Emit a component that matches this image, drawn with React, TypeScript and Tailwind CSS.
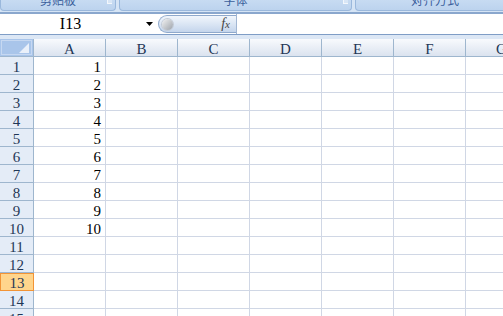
import * as React from "react";

const columns = ["A", "B", "C", "D", "E", "F", "G"];
const rows = Array.from({ length: 15 }, (_, i) => i + 1);
const values: Record<number, number> = { 1: 1, 2: 2, 3: 3, 4: 4, 5: 5, 6: 6, 7: 7, 8: 8, 9: 9, 10: 10 };

function RibbonGroup({ label, width, launcher = true }: { label: string; width: string; launcher?: boolean }) {
  return (
    <div
      className={`relative h-[11px] shrink-0 overflow-hidden rounded-b-[4px] border border-t-0 border-[#9ab8dc] bg-gradient-to-b from-[#c7dbf2] to-[#bcd3ee] ${width}`}
    >
      <div className="-mt-[7px] text-center font-['Noto_Sans_CJK_SC',sans-serif] text-[12px] leading-[14px] text-[#3b5f9c]">
        {label}
      </div>
      {launcher && (
        <div className="absolute right-[3px] top-0 h-[4px] w-[5px] border-b border-l border-[#f3f7fc] bg-[#d8e6f6]" />
      )}
    </div>
  );
}

export default function App() {
  return (
    <div className="h-[316px] w-[503px] overflow-hidden bg-white font-['Liberation_Serif','Noto_Sans_CJK_SC',serif]">
      {/* Ribbon group labels */}
      <div className="flex h-[12px] gap-[3px] bg-[#d5e4f5]">
        <RibbonGroup label="剪贴板" width="w-[116px]" />
        <RibbonGroup label="字体" width="w-[233px]" />
        <RibbonGroup label="对齐方式" width="w-[160px]" />
      </div>
      <div className="h-[2px] bg-[#8aa7cd]" />

      {/* Formula bar */}
      <div className="flex h-[20px] bg-white">
        <div className="relative flex w-[158px] shrink-0 items-center">
          <span className="w-[141px] text-center text-[16px] leading-none text-black">I13</span>
          <svg width="7" height="4" viewBox="0 0 7 4" className="absolute left-[146px] top-[8px]">
            <path d="M0 0H7L3.5 4Z" fill="#000" />
          </svg>
        </div>
        <div className="relative my-[1px] flex w-[78px] shrink-0 items-center justify-end rounded-l-full border border-r-0 border-[#8fa9cc] bg-gradient-to-b from-[#f1f6fc] via-[#dbe6f4] to-[#c4d5ec] pr-[6px]">
          <div className="absolute left-[3px] top-[3px] h-[11px] w-[11px] rounded-full bg-gradient-to-br from-[#f3f3f3] to-[#9da3ab] shadow-[0_0_0_1px_#c3cbd6]" />
          <span className="text-[14px] italic leading-none text-[#444]">
            f<span className="text-[11px]">x</span>
          </span>
        </div>
        <div className="flex-1 border-l border-[#a2b7d3] bg-white" />
      </div>
      <div className="h-[1px] bg-[#7f9dc6]" />
      <div className="h-[4px] bg-[#dce7f5]" />

      {/* Grid */}
      <div className="flex h-[18px]">
        <div className="relative h-[18px] w-[34px] shrink-0 border-b border-r border-[#9eb6ce] bg-[#a9c5ea]">
          <div className="absolute inset-[1px] border border-[#c6d8f1]" />
          <svg width="10" height="10" viewBox="0 0 10 10" className="absolute bottom-[3px] right-[4px]">
            <path d="M10 0V10H0Z" fill="#e9f0fa" />
          </svg>
        </div>
        {columns.map((c) => (
          <div
            key={c}
            className="flex h-[18px] w-[72px] shrink-0 items-end justify-center border-b border-r border-[#9eb6ce] bg-gradient-to-b from-[#f8fafd] to-[#dbe3ef] text-[15px] leading-[13px] text-[#1f3756]"
          >
            {c}
          </div>
        ))}
      </div>
      {rows.map((r) => {
        const active = r === 13;
        return (
          <div key={r} className="flex h-[18px]">
            <div
              className={`flex h-[18px] w-[34px] shrink-0 items-end justify-center text-[15px] leading-[13px] text-[#1f3756] ${
                active
                  ? "border border-[#f29436] bg-[#ffd58c]"
                  : "border-b border-r border-[#9eb6ce] bg-[#e4ecf7]"
              }`}
            >
              {r}
            </div>
            {columns.map((c) => (
              <div
                key={c}
                className="flex h-[18px] w-[72px] shrink-0 items-end justify-end border-b border-r border-[#d0d7e5] pr-[4px] text-[15px] leading-[13px] text-black"
              >
                {c === "A" && values[r] !== undefined ? values[r] : ""}
              </div>
            ))}
          </div>
        );
      })}
    </div>
  );
}
